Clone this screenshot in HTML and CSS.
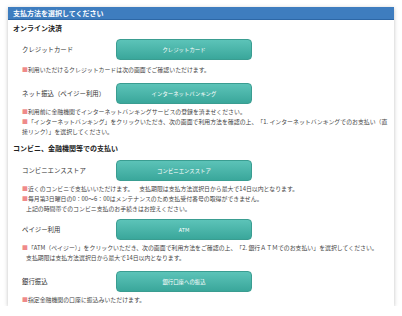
FILE: index.html
```html
<!DOCTYPE html>
<html lang="ja">
<head>
    <meta charset="UTF-8">
    <meta name="viewport" content="width=device-width, initial-scale=1.0">
    <title>支払方法を選択してください</title>
    <link rel="stylesheet" href="styles.css">
</head>
<body>

    <div class="panel">
        <div class="panel-head">支払方法を選択してください</div>

        <!-- オンライン決済 -->
        <div class="group">
            <div class="group-title">オンライン決済</div>

            <div class="method">
                <div class="method-label">クレジットカード</div>
                <button class="pay-btn">クレジットカード</button>
            </div>
            <div class="notes first">
                <p><span class="mark">■</span>利用いただけるクレジットカードは次の画面でご確認いただけます。</p>
            </div>

            <div class="method spaced">
                <div class="method-label">ネット振込（ペイジー利用）</div>
                <button class="pay-btn">インターネットバンキング</button>
            </div>
            <div class="notes">
                <p><span class="mark">■</span>利用前に金融機関でインターネットバンキングサービスの登録を済ませください。</p>
                <p><span class="mark">■</span>「インターネットバンキング」をクリックいただき、次の画面で利用方法を確認の上、「1. インターネットバンキングでのお支払い（直</p>
                <p>接リンク）」を選択してください。</p>
            </div>
        </div>

        <!-- コンビニ、金融機関等 -->
        <div class="group second">
            <div class="group-title">コンビニ、金融機関等での支払い</div>

            <div class="method">
                <div class="method-label">コンビニエンスストア</div>
                <button class="pay-btn">コンビニエンスストア</button>
            </div>
            <div class="notes">
                <p><span class="mark">■</span>近くのコンビニで支払いいただけます。　支払期限は支払方法選択日から最大で14日以内となります。</p>
                <p><span class="mark">■</span>毎月第3日曜日の0：00～6：00はメンテナンスのため支払受付番号の取得ができません。</p>
                <p class="indent">上記の時間帯でのコンビニ支払のお手続きはお控えください。</p>
            </div>

            <div class="method tight">
                <div class="method-label">ペイジー利用</div>
                <button class="pay-btn">ATM</button>
            </div>
            <div class="notes">
                <p><span class="mark">■</span>「ATM（ペイジー）」をクリックいただき、次の画面で利用方法をご確認の上、「2. 銀行ＡＴＭでのお支払い」を選択してください。</p>
                <p class="indent">支払期限は支払方法選択日から最大で14日以内となります。</p>
            </div>

            <div class="method spaced">
                <div class="method-label">銀行振込</div>
                <button class="pay-btn">銀行口座への振込</button>
            </div>
            <div class="notes">
                <p><span class="mark">■</span>指定金融機関の口座に振込みいただけます。</p>
            </div>
        </div>
    </div>

</body>
</html>
```

FILE: styles.css
```css
body {
    margin: 0;
    padding: 7px 8px 0;
    background: #fff;
    font-family: "Noto Sans CJK JP", "Noto Sans", sans-serif;
    color: #333;
}
.panel {
    width: 386px;
    padding-bottom: 1px;
    background: #fff;
    box-shadow: 0 1px 4px rgba(0, 0, 0, 0.25);
}
.panel-head {
    height: 12px;
    line-height: 12px;
    padding-left: 5px;
    background: #3e7dbf;
    border-bottom: 1px solid #2d67a6;
    color: #fff;
    font-size: 7px;
    font-weight: bold;
}
.group-title {
    padding-left: 5px;
    margin-top: 2px;
    height: 12px;
    line-height: 12px;
    font-size: 7px;
    font-weight: bold;
    color: #222;
}
.group.second .group-title {
    margin-top: 5px;
}
.method {
    display: flex;
    align-items: center;
    padding-left: 14px;
    margin-top: 6px;
}
.group-title + .method {
    margin-top: 5px;
}
.group.second .group-title + .method {
    margin-top: 6px;
}
.method.spaced {
    margin-top: 8px;
}
.method.tight {
    margin-top: 5px;
}
.method-label {
    width: 94px;
    font-size: 6.4px;
    color: #333;
}
.pay-btn {
    width: 136px;
    height: 21px;
    padding: 0;
    border: 1px solid #3a9d91;
    border-radius: 4px;
    background: linear-gradient(#5cc3b8, #3aa79b);
    color: #fff;
    font-family: inherit;
    font-size: 5.4px;
    cursor: pointer;
}
.notes {
    padding: 3px 0 0 14px;
    font-size: 5.9px;
    line-height: 10px;
    color: #444;
    white-space: nowrap;
}
.notes.first {
    padding-top: 5px;
}
.notes p {
    margin: 0;
}
.notes p.indent {
    padding-left: 4px;
}
.mark {
    color: #ef8a8a;
}
```
